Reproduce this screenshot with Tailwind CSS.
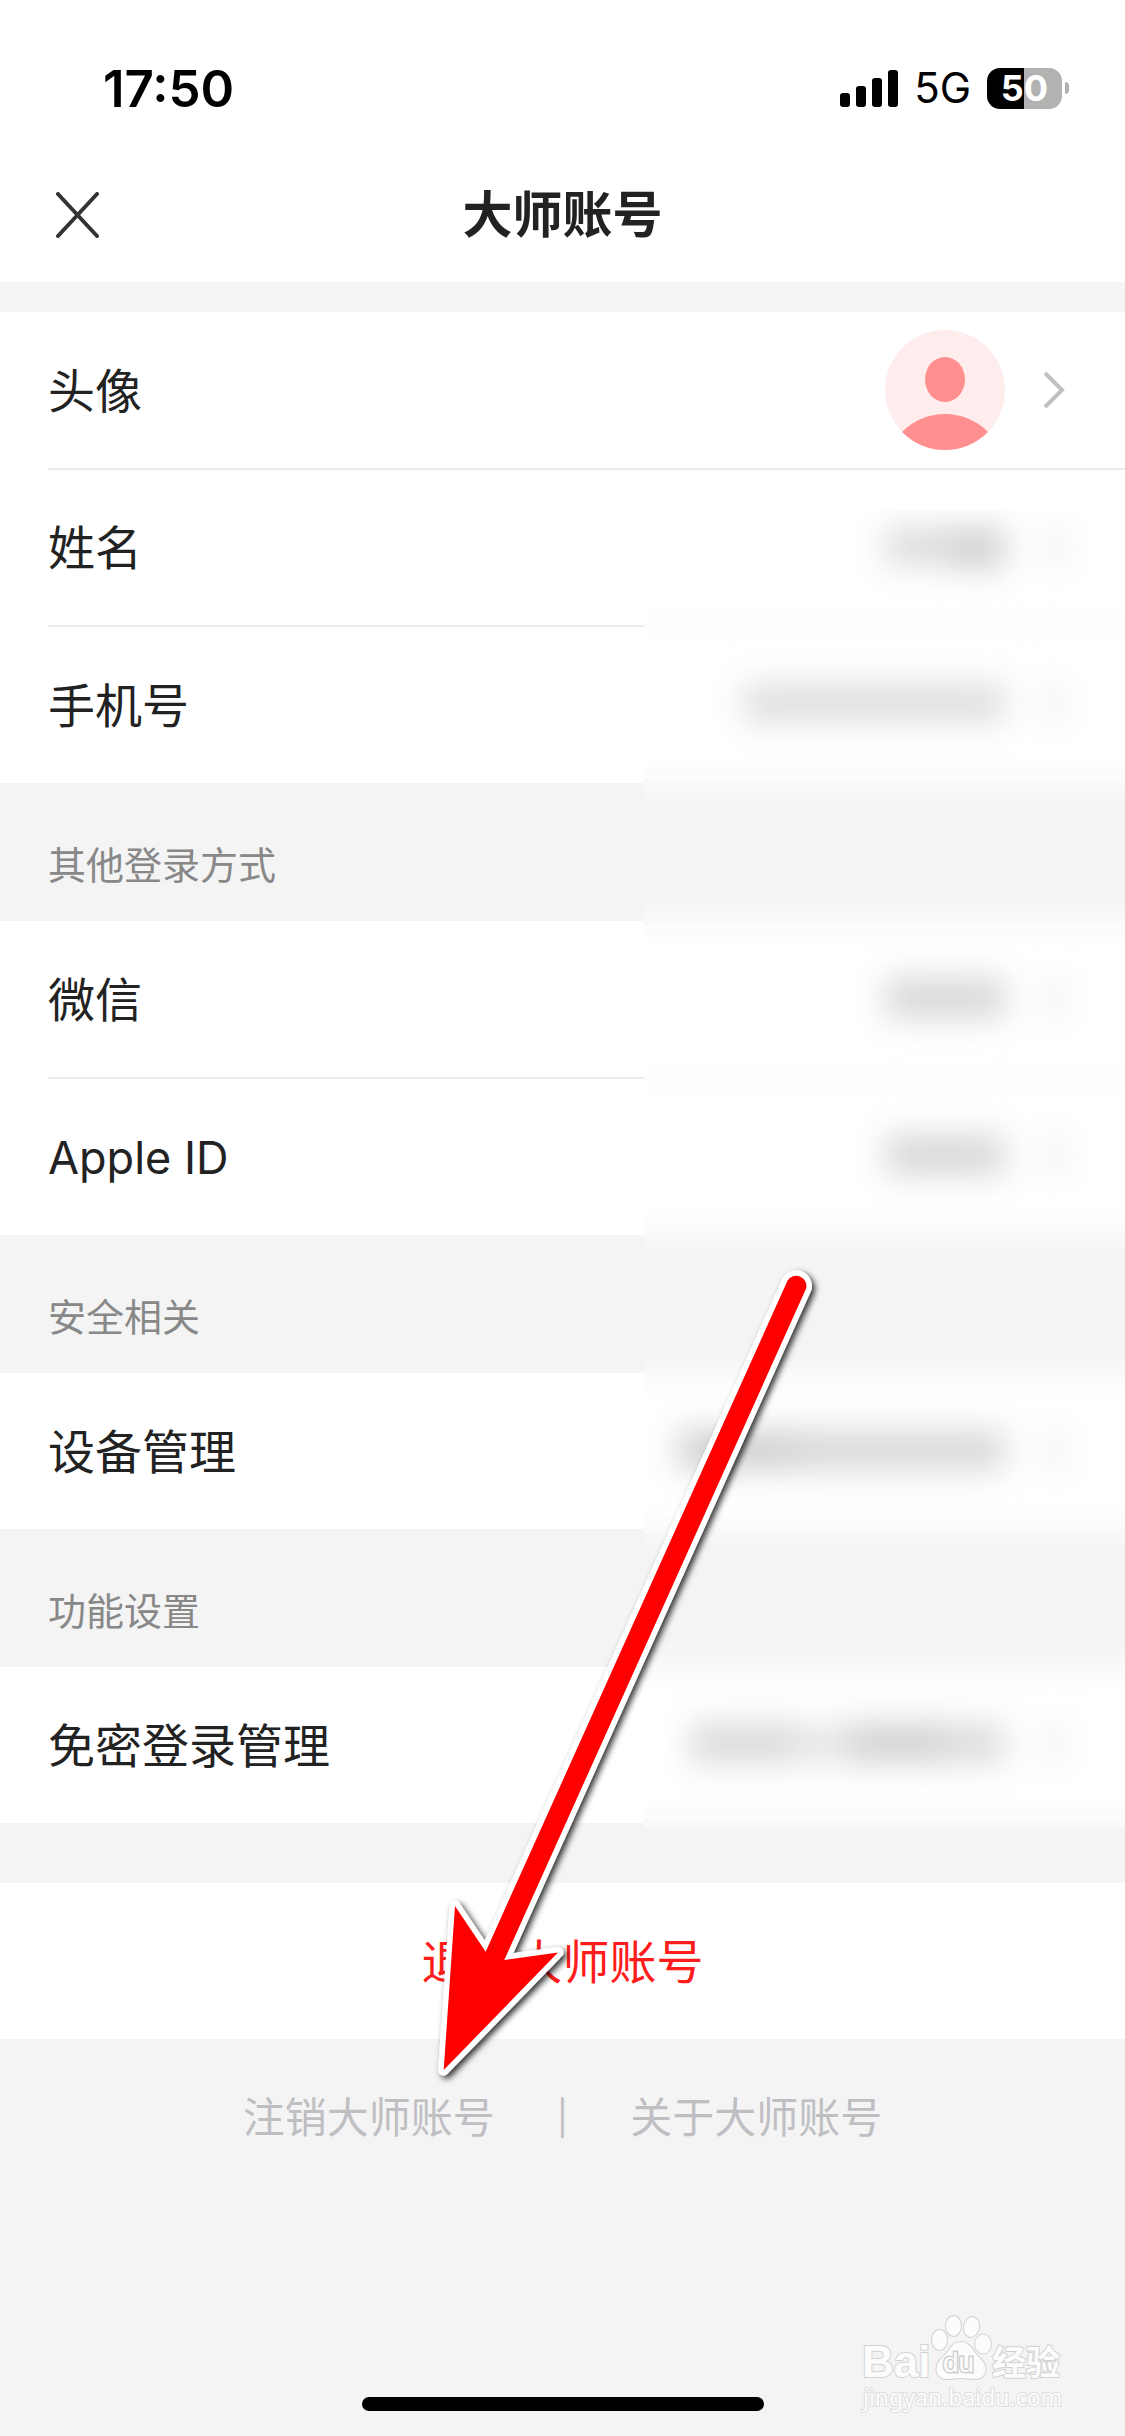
<!DOCTYPE html>
<html lang="zh-CN">
<head>
    <meta charset="UTF-8">
    <meta name="viewport" content="width=device-width, initial-scale=1.0">
    <title>大师账号</title>
    <script src="https://cdn.jsdelivr.net/npm/@tailwindcss/browser@4"></script>
</head>
<body class="relative flex min-h-screen flex-col bg-[#f4f4f4] font-[Inter,'Noto_Sans_CJK_SC',sans-serif] text-[47px] leading-none text-[#222]">
    <!-- Status bar -->
    <div class="flex h-[142px] items-center justify-between bg-white pt-[34px] pr-14 pl-[103px] text-black">
        <span class="text-[51px] font-semibold">17:50</span>
        <div class="flex items-center">
            <svg class="h-[37px] w-[58px]" viewBox="0 0 58 37" fill="currentColor" aria-hidden="true">
                <rect x="0" y="23" width="10" height="14" rx="3"/>
                <rect x="16" y="16" width="10" height="21" rx="3"/>
                <rect x="32" y="8" width="10" height="29" rx="3"/>
                <rect x="48" y="0" width="10" height="37" rx="3"/>
            </svg>
            <span class="ml-4 text-[42px]">5G</span>
            <div class="ml-4 flex items-center gap-[3px]">
                <div class="flex h-[41px] w-[75px] items-center justify-center rounded-[13px] bg-linear-to-r from-black from-50% to-[#b2b2b2] to-50% text-[36px] font-bold text-white">50</div>
                <div class="h-3 w-1 rounded-r-full bg-[#b2b2b2]"></div>
            </div>
        </div>
    </div>

    <!-- Title bar -->
    <header class="grid h-[140px] grid-cols-[1fr_auto_1fr] items-center bg-white px-[55px] pt-1.5">
        <button type="button" aria-label="关闭" class="justify-self-start">
            <svg class="h-[46px] w-[44px]" viewBox="0 0 44 46" fill="none" stroke="#333" stroke-width="4" stroke-linecap="round">
                <path d="M3 2l39 42M42 2L3 44"/>
            </svg>
        </button>
        <h1 class="text-[50px] font-bold">大师账号</h1>
    </header>

    <main>
        <!-- Profile -->
        <section class="mt-[30px] bg-white pl-12">
            <a href="#" class="flex h-[158px] items-center justify-between border-b-2 border-[#ebebeb] pr-[60px]">
                头像
                <span class="flex items-center gap-[38px]">
                    <svg class="size-[120px]" viewBox="0 0 120 120" aria-hidden="true">
                        <clipPath id="avatarClip"><circle cx="60" cy="60" r="60"/></clipPath>
                        <g clip-path="url(#avatarClip)">
                            <rect width="120" height="120" fill="#ffecec"/>
                            <ellipse cx="60" cy="49.500" rx="20" ry="22.500" fill="#ff8f8f"/>
                            <circle cx="60" cy="144" r="60" fill="#ff8f8f"/>
                        </g>
                    </svg>
                    <svg class="h-[38px] w-[22px]" viewBox="0 0 22 38" fill="none" stroke="#c0c0c3" stroke-width="4"><path d="M2 2l17 17L2 36"/></svg>
                </span>
            </a>
            <a href="#" class="flex h-[157px] items-center border-b-2 border-[#ebebeb]">姓名</a>
            <a href="#" class="flex h-[156px] items-center">手机号</a>
        </section>

        <!-- Other sign-in methods -->
        <h2 class="flex h-[138px] items-center pt-[26px] pl-12 text-[38px] text-[#888]">其他登录方式</h2>
        <section class="bg-white pl-12">
            <a href="#" class="flex h-[158px] items-center border-b-2 border-[#ebebeb]">微信</a>
            <a href="#" class="flex h-[156px] items-center text-[45px]">Apple ID</a>
        </section>

        <!-- Security -->
        <h2 class="flex h-[138px] items-center pt-[26px] pl-12 text-[38px] text-[#888]">安全相关</h2>
        <section class="bg-white pl-12">
            <a href="#" class="flex h-[156px] items-center">设备管理</a>
        </section>

        <!-- Features -->
        <h2 class="flex h-[138px] items-center pt-[26px] pl-12 text-[38px] text-[#888]">功能设置</h2>
        <section class="bg-white pl-12">
            <a href="#" class="flex h-[156px] items-center">免密登录管理</a>
        </section>

        <button type="button" class="mt-[60px] h-[156px] w-full bg-white text-[#ff1c1c]">退出大师账号</button>

        <nav class="mt-[58px] flex items-center justify-center gap-[62px] text-[42px] text-[#bfbfc3]">
            <a href="#">注销大师账号</a>
            <span class="text-[34px]">|</span>
            <a href="#">关于大师账号</a>
        </nav>
    </main>

    <!-- Home indicator -->
    <div class="mx-auto mt-auto mb-[25px] h-[14px] w-[402px] rounded-full bg-black"></div>

    <!-- Privacy mask over the account values -->
    <svg class="pointer-events-none absolute top-[510px] right-0 h-[1318px] w-[481px] overflow-hidden" viewBox="0 0 481 1318" aria-hidden="true">
        <defs>
            <filter id="maskBlur" filterUnits="userSpaceOnUse" x="-100" y="-100" width="681" height="1518" color-interpolation-filters="sRGB">
                <feGaussianBlur stdDeviation="16"/>
            </filter>
        </defs>
        <rect width="481" height="1318" fill="#fff"/>
        <g filter="url(#maskBlur)">
            <!-- section gaps -->
            <g fill="#f4f4f4">
                <rect x="-100" y="273" width="681" height="138"/>
                <rect x="-100" y="725" width="681" height="138"/>
                <rect x="-100" y="1019" width="681" height="138"/>
                <rect x="-100" y="1313" width="681" height="100"/>
            </g>
            <!-- row dividers -->
            <g fill="#ebebeb">
                <rect x="-100" y="115" width="681" height="2"/>
                <rect x="-100" y="567" width="681" height="2"/>
            </g>
            <!-- values -->
            <rect x="241" y="17" width="64" height="38" fill="#dcdcdc"/>
            <rect x="305" y="17" width="56" height="42" fill="#d1d1d1"/>
            <rect x="99" y="174" width="262" height="38" fill="#dedede"/>
            <rect x="241" y="468" width="120" height="40" fill="#d7d7d7"/>
            <rect x="241" y="625" width="120" height="40" fill="#d7d7d7"/>
            <rect x="34" y="920" width="120" height="40" fill="#d1d1d1"/>
            <rect x="154" y="920" width="207" height="40" fill="#d8d8d8"/>
            <rect x="46" y="1213" width="106" height="40" fill="#dadada"/>
            <rect x="152" y="1213" width="52" height="40" fill="#e8e8e8"/>
            <rect x="204" y="1213" width="96" height="40" fill="#d2d2d2"/>
            <rect x="300" y="1213" width="61" height="40" fill="#dcdcdc"/>
            <!-- chevrons -->
            <g fill="#f0f0f0">
                <rect x="400" y="18" width="21" height="38"/>
                <rect x="400" y="174" width="21" height="38"/>
                <rect x="400" y="469" width="21" height="38"/>
                <rect x="400" y="626" width="21" height="38"/>
                <rect x="400" y="921" width="21" height="38"/>
                <rect x="400" y="1214" width="21" height="38"/>
            </g>
        </g>
    </svg>

    <!-- Pointer to the delete-account link -->
    <svg class="pointer-events-none absolute top-[1260px] left-[430px] h-[830px] w-[400px] overflow-visible" viewBox="430 1260 400 830" aria-hidden="true">
        <defs>
            <filter id="arrowShadow" x="-10%" y="-10%" width="120%" height="120%">
                <feDropShadow dx="3" dy="3" stdDeviation="3" flood-color="#000" flood-opacity="0.8"/>
            </filter>
        </defs>
        <path filter="url(#arrowShadow)" fill="#f00" stroke="#fff" stroke-width="11" stroke-linejoin="round" paint-order="stroke" d="M485.700 1951.700L787.600 1280.500A10.200 10.200 0 0 1 806 1288.800L504.300 1960L558 1952.500L443.700 2070L455 1906Z"/>
    </svg>

    <!-- Watermark -->
    <svg class="pointer-events-none absolute right-[55px] bottom-[20px] h-[106px] w-[210px] font-['Liberation_Sans','Noto_Sans_CJK_SC',sans-serif]" viewBox="860 2310 210 106" fill="#fcfcfc" stroke="#d2d2d2" stroke-width="2" paint-order="stroke" aria-label="Baidu 经验">
        <text x="862" y="2377" font-size="44" font-weight="700">Bai</text>
        <ellipse cx="939.500" cy="2340" rx="7.500" ry="10"/>
        <ellipse cx="953.500" cy="2326" rx="7.500" ry="10"/>
        <ellipse cx="971.500" cy="2327" rx="7.500" ry="10" transform="rotate(12 971.500 2327)"/>
        <ellipse cx="983" cy="2344" rx="8" ry="9.500"/>
        <path d="M960.500 2342c7 0 11 5 14 10 4 6 11 9 11 17 0 6-4 10-10 10-5 0-10-1-15-1s-9 1-14 1c-6 0-10-4-10-10 0-8 7-12 11-17 3-5 7-10 13-10z"/>
        <text x="943" y="2372" font-size="28" font-weight="400" stroke-width="3" stroke="#cfcfcf">du</text>
        <text x="992" y="2375" font-size="34" font-weight="700" font-family="Noto Sans CJK SC">经验</text>
        <text x="863" y="2406" font-size="23" font-family="Noto Sans" stroke="#dedede">jingyan.baidu.com</text>
    </svg>
</body>
</html>
